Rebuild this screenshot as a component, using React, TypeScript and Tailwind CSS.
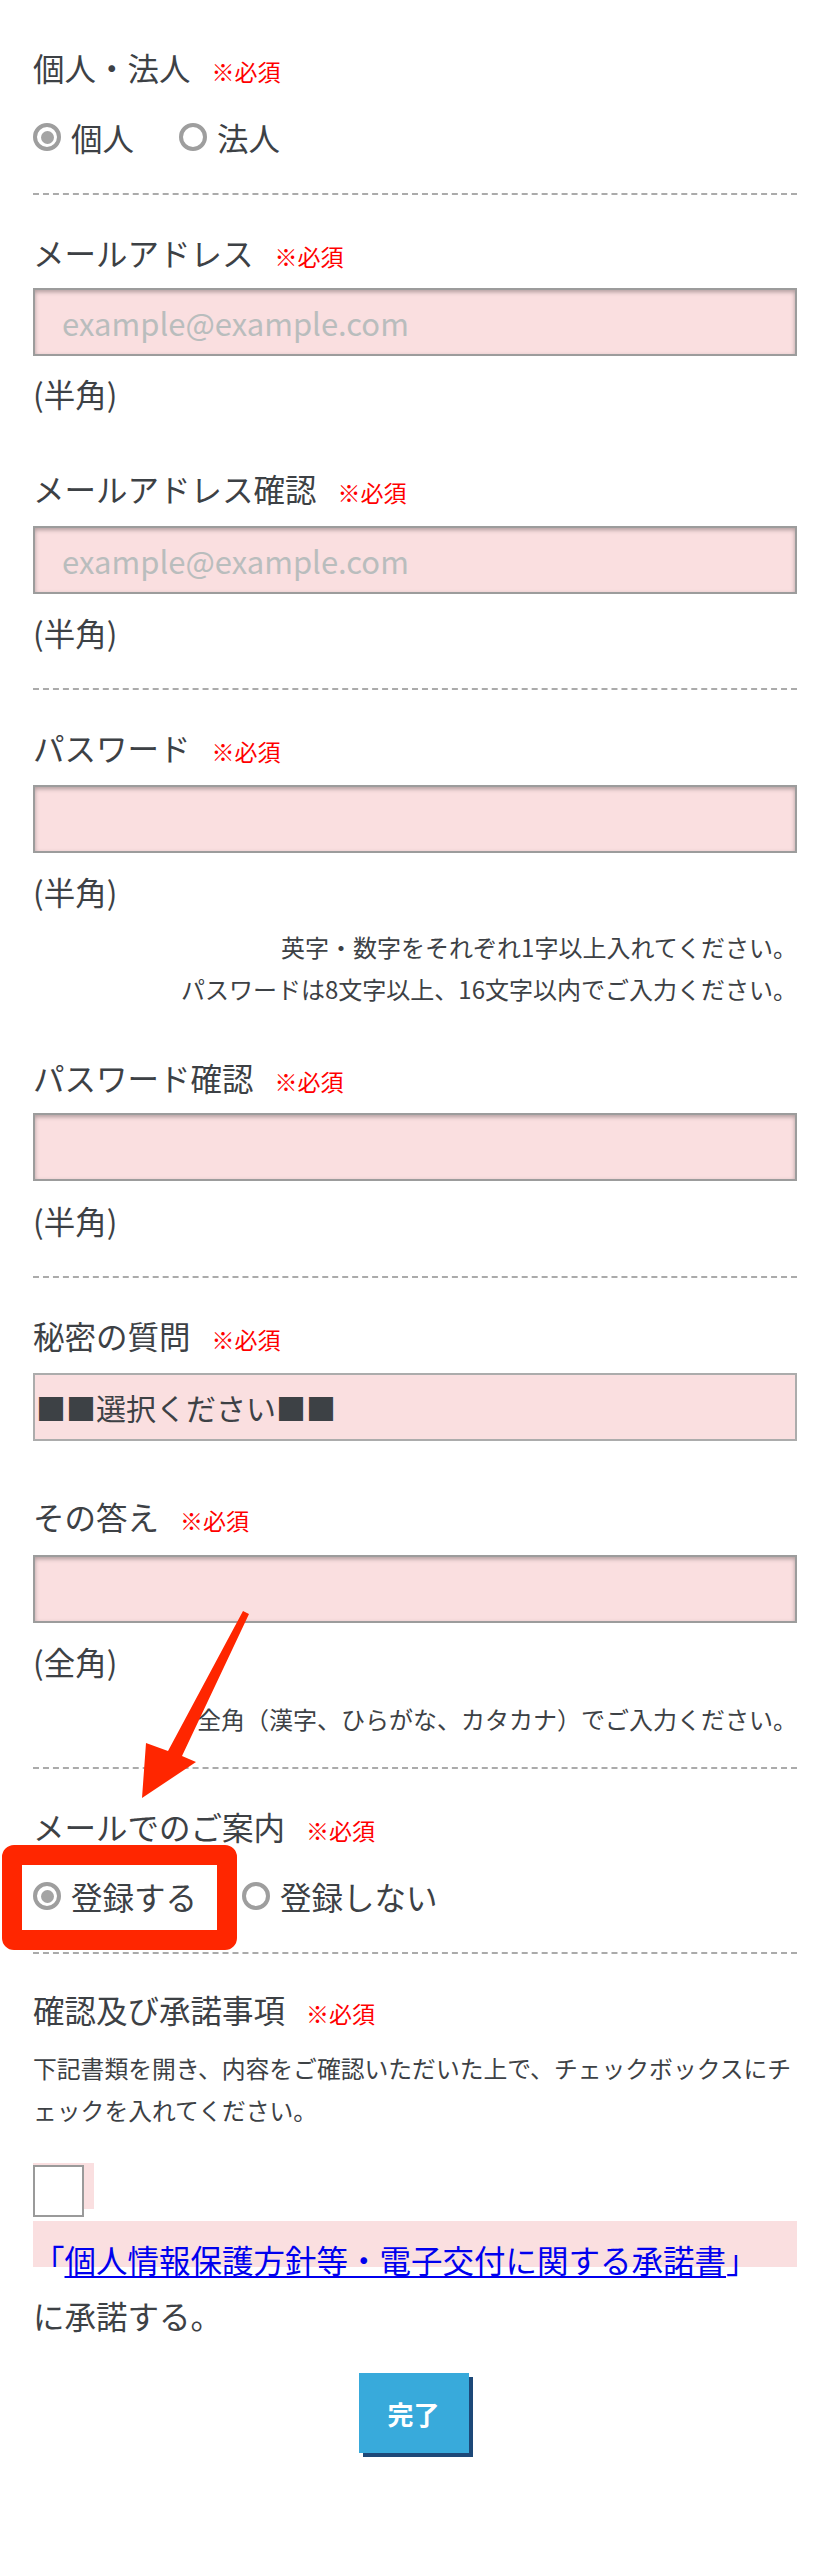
const font = "font-['Noto_Sans_CJK_JP',sans-serif]";

function Label({ text, className = "" }: { text: string; className?: string }) {
  return (
    <div className={`text-[31.5px] leading-[40px] ${className}`}>
      {text}
      <span className="ml-[21px] text-[23px] leading-none text-[#ff0000]">※必須</span>
    </div>
  );
}

function Radio({ checked, label }: { checked?: boolean; label: string }) {
  return (
    <div className="flex items-center">
      <span className="flex h-[28px] w-[28px] items-center justify-center rounded-full border-4 border-[#9e9e9e] bg-white">
        {checked && <span className="h-[13px] w-[13px] rounded-full bg-[#a4a4a4]" />}
      </span>
      <span className="ml-[10px] text-[31.5px] leading-[40px]">{label}</span>
    </div>
  );
}

function Field({ placeholder, className = "" }: { placeholder?: string; className?: string }) {
  return (
    <input
      readOnly
      placeholder={placeholder}
      className={`block h-[68px] w-full border-2 border-[#9c9c9c] bg-[#fadfe0] pl-[27px] text-[31px] shadow-[inset_0_2px_4px_rgba(0,0,0,0.3)] outline-none placeholder:text-[#b9bdbd] ${className}`}
    />
  );
}

function Note({ text, className = "" }: { text: string; className?: string }) {
  return <div className={`text-[31.5px] leading-[40px] ${className}`}>{text}</div>;
}

const Dash = ({ className = "" }: { className?: string }) => (
  <div className={`border-t-2 border-dashed border-[#ababab] ${className}`} />
);

export default function App() {
  return (
    <div className={`relative min-h-[2560px] w-[827px] bg-white text-[#3d4145] ${font}`}>
      <div className="pl-[33px] pr-[30px] pt-[47px]">
        <Label text="個人・法人" />
        <div className="mt-[30px] flex h-[40px] items-center gap-[45px]">
          <Radio checked label="個人" />
          <Radio label="法人" />
        </div>
        <Dash className="mt-[36px]" />

        <Label text="メールアドレス" className="mt-[37px]" />
        <Field placeholder="example@example.com" className="mt-[16px]" />
        <Note text="(半角)" className="mt-[17px]" />

        <Label text="メールアドレス確認" className="mt-[55px]" />
        <Field placeholder="example@example.com" className="mt-[18px]" />
        <Note text="(半角)" className="mt-[18px]" />
        <Dash className="mt-[36px]" />

        <Label text="パスワード" className="mt-[37px]" />
        <Field className="mt-[18px]" />
        <Note text="(半角)" className="mt-[18px]" />
        <div className="mt-[15px] text-right text-[24px] leading-[42px]">
          <div>英字・数字をそれぞれ1字以上入れてください。</div>
          <div>パスワードは8文字以上、16文字以内でご入力ください。</div>
        </div>

        <Label text="パスワード確認" className="mt-[47px]" />
        <Field className="mt-[16px]" />
        <Note text="(半角)" className="mt-[19px]" />
        <Dash className="mt-[36px]" />

        <Label text="秘密の質問" className="mt-[37px]" />
        <div className="mt-[18px] flex h-[68px] items-center border-2 border-[#acacac] bg-[#fadfe0] pl-[1px] text-[30px]">
          ■■選択ください■■
        </div>

        <Label text="その答え" className="mt-[55px]" />
        <Field className="mt-[19px]" />
        <Note text="(全角)" className="mt-[18px]" />
        <div className="mt-[17px] text-right text-[24px] leading-[42px]">
          全角（漢字、ひらがな、カタカナ）でご入力ください。
        </div>
        <Dash className="mt-[27px]" />

        <Label text="メールでのご案内" className="mt-[37px]" />
        <div className="mt-[30px] flex h-[40px] items-center gap-[45px]">
          <Radio checked label="登録する" />
          <Radio label="登録しない" />
        </div>
        <Dash className="mt-[36px]" />

        <Label text="確認及び承諾事項" className="mt-[35px]" />
        <p className="mt-[18px] text-[23.8px] leading-[42px]">
          下記書類を開き、内容をご確認いただいた上で、チェックボックスにチェックを入れてください。
        </p>

        <div className="mt-[32px] h-[54px]">
          <div className="h-[46px] w-[61px] bg-[#fadfe0] pt-[2px]">
            <div className="h-[52px] w-[51px] border-2 border-[#9a9a9a] bg-white" />
          </div>
        </div>
        <div className="mt-[4px] h-[46px] bg-[#fadfe0] pt-[18px] text-[31.5px] leading-[40px] text-[#0000ee]">
          「
          <a href="#" className="underline decoration-2 underline-offset-[3px]">
            個人情報保護方針等・電子交付に関する承諾書
          </a>
          」
        </div>
        <Note text="に承諾する。" className="mt-[28px]" />
      </div>

      <div className="mt-[38px] flex justify-center">
        <button className="h-[80px] w-[110px] bg-[#38aadb] text-[26px] font-bold text-white shadow-[4px_4px_0_#1d4878]">
          完了
        </button>
      </div>

      {/* annotation: red highlight and arrow */}
      <div className="pointer-events-none absolute left-[2px] top-[1845px] h-[105px] w-[235px] rounded-[12px] border-[20px] border-[#ff2600]" />
      <svg
        className="pointer-events-none absolute left-0 top-0"
        width="827"
        height="2560"
        viewBox="0 0 827 2560"
      >
        <polygon
          points="243,1611 249,1614 182,1756 196,1762 142,1798 146,1743 168,1751"
          fill="#ff2600"
        />
      </svg>
    </div>
  );
}
